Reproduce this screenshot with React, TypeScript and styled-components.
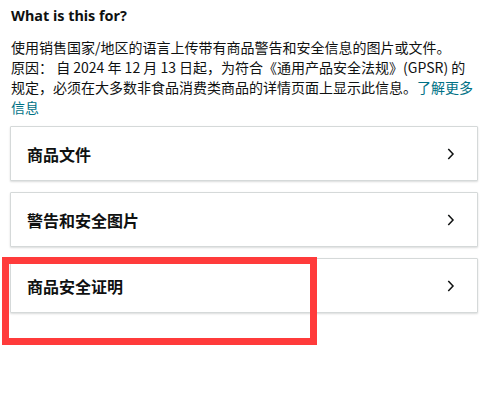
import React from "react";
import styled, { createGlobalStyle } from "styled-components";

const Global = createGlobalStyle`
  html, body { margin: 0; padding: 0; background: #ffffff; }
  body { font-family: "Noto Sans", "Noto Sans CJK SC", sans-serif; color: #0f1111; }
`;

const Page = styled.div`
  position: relative;
  width: 468px;
  min-height: 400px;
  padding: 5px 6px 0 10px;
  display: flex;
  flex-direction: column;
`;

const Heading = styled.h3`
  margin: 0 0 0 1px;
  font-family: "Noto Sans", "Noto Sans CJK SC", sans-serif;
  font-size: 14.4px;
  font-weight: 700;
  line-height: 22px;
  color: #0f1111;
`;

const Body = styled.p`
  margin: 10px 0 0 1px;
  font-family: "Noto Sans CJK SC", "Noto Sans", sans-serif;
  font-size: 14px;
  line-height: 20px;
  color: #0f1111;
`;

const Link = styled.a`
  color: #007185;
  text-decoration: none;
`;

const List = styled.div`
  display: flex;
  flex-direction: column;
  gap: 11px;
  margin-top: 9px;
`;

const Card = styled.div`
  height: 53px;
  border: 1px solid #d5d9d9;
  border-radius: 1px;
  box-shadow: 0 1px 2px rgba(15, 17, 17, 0.15);
  display: flex;
  align-items: center;
  justify-content: space-between;
  padding: 0 22px 0 16px;
  background: #fff;
`;

const CardTitle = styled.span`
  font-family: "Noto Sans CJK SC", "Noto Sans", sans-serif;
  font-size: 16px;
  font-weight: 700;
  color: #0f1111;
`;

const Highlight = styled.div`
  position: absolute;
  z-index: 2;
  left: 2px;
  top: 257px;
  width: 315px;
  height: 88px;
  box-sizing: border-box;
  border: 7px solid #ff3b3b;
  pointer-events: none;
`;

const Chevron = () => (
  <svg width="8" height="12" viewBox="0 0 8 12" fill="none">
    <path d="M1.8 1.6L6 6L1.8 10.4" stroke="#0f1111" strokeWidth="1.5" strokeLinecap="square" strokeLinejoin="miter" />
  </svg>
);

const items = ["商品文件", "警告和安全图片", "商品安全证明"];

export default function App() {
  return (
    <>
      <Global />
      <Page>
        <Heading>What is this for?</Heading>
        <Body>
          使用销售国家/地区的语言上传带有商品警告和安全信息的图片或文件。
          <br />
          原因： 自 2024 年 12 月 13 日起，为符合《通用产品安全法规》(GPSR) 的规定，必须在大多数非食品消费类商品的详情页面上显示此信息。
          <Link href="#">了解更多信息</Link>
        </Body>
        <List>
          {items.map((t) => (
            <Card key={t}>
              <CardTitle>{t}</CardTitle>
              <Chevron />
            </Card>
          ))}
        </List>
        <Highlight />
      </Page>
    </>
  );
}
